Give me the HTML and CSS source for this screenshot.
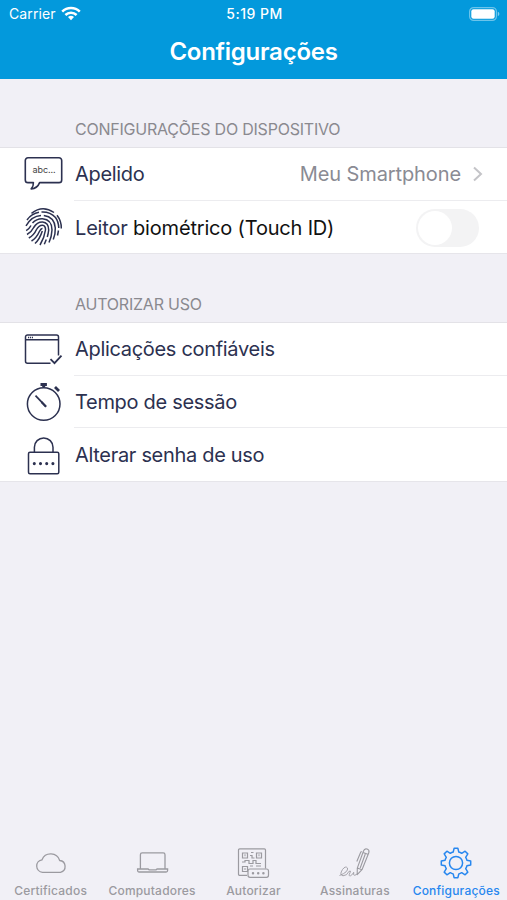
FILE: index.html
```
<!DOCTYPE html>
<html lang="pt-BR">
<head>
    <meta charset="UTF-8">
    <meta name="viewport" content="width=device-width, initial-scale=1.0">
    <title>Configurações</title>
    <link rel="stylesheet" href="styles.css">
</head>
<body>
    <header class="header">
        <div class="status-bar">
            <div class="carrier">
                <span>Carrier</span>
                <svg class="wifi" width="20" height="15" viewBox="0 0 20 15" fill="none" stroke="#fff" stroke-width="2.5">
                    <path d="M1.2 5.6a12.5 12.5 0 0 1 17.6 0M4.4 9a8 8 0 0 1 11.2 0"/>
                    <path d="M10 14.2l-3-3.1a4.4 4.4 0 0 1 6 0z" fill="#fff" stroke="none"/>
                </svg>
            </div>
            <span class="time">5:19 PM</span>
            <svg class="battery" width="31" height="14" viewBox="0 0 31 14">
                <rect x=".6" y=".6" width="26.8" height="12.8" rx="4" fill="none" stroke="#fff" stroke-opacity=".42" stroke-width="1.2"/>
                <rect x="2.3" y="2.3" width="23.4" height="9.4" rx="2.2" fill="#fff"/>
                <path d="M28.8 4.8v4.4q1.6-.6 1.6-2.2t-1.6-2.2z" fill="#fff" fill-opacity=".5"/>
            </svg>
        </div>
        <h1>Configurações</h1>
    </header>

    <main>
        <h2>CONFIGURAÇÕES DO DISPOSITIVO</h2>
        <ul class="list">
            <li class="row">
                <svg class="icon" viewBox="0 0 40 40" fill="none" stroke="#2c3150" stroke-width="1.6" stroke-linejoin="round">
                    <path d="M5 3.8h31a2.7 2.7 0 0 1 2.7 2.7v19.4a2.7 2.7 0 0 1-2.7 2.7H16.6q-2.2 5.8-8.4 6.3 2.4-2.6 2.2-6.3H5a2.7 2.7 0 0 1-2.7-2.7V6.5A2.7 2.7 0 0 1 5 3.8z"/>
                    <text class="bubble-text" x="9.6" y="19.3">abc...</text>
                </svg>
                <div class="cell">
                    <span class="label">Apelido</span>
                    <span class="value">Meu Smartphone</span>
                    <svg class="chevron" width="10" height="16" viewBox="0 0 10 16" fill="none" stroke="#c4c4c8" stroke-width="2">
                        <path d="M1 1.5l7 6.5-7 6.5"/>
                    </svg>
                </div>
            </li>
            <li class="row">
                <svg class="icon" viewBox="0 0 40 40" fill="none" stroke="#2c3150" stroke-width="1.5">
                    <path d="M8.5 6.3Q19.5-2.3 31 5.5"/>
                    <path d="M4 13Q8.500 6.500 16 5.300M18.500 5Q27 4.500 32.500 10.500 35.500 14.500 35.800 21M38.300 21.500Q38.500 14 34 8.300"/>
                    <path d="M3 18.800Q8.500 9 18 8.400M20.800 8.500Q31.500 9.800 32.300 21 32.500 27 30.300 32.500M35.500 23.500l-1 5"/>
                    <path d="M3.200 23.600Q6.500 21.500 8 18.500M9.500 16Q13.500 11.500 19.500 11.700 29 12.500 29 23 28.700 30 26 35.500"/>
                    <path d="M4 27.500Q8.500 25 10.700 20.500 14 14.900 19.500 15 25.700 15.600 25.700 23 25.300 26.500 24.300 30M23.300 32.500l-2 4.700"/>
                    <path d="M5.800 31Q11 28.200 13.500 22.500 16 18.100 19.500 18.200 22.700 18.600 22.500 23 21.500 30.500 17 38"/>
                    <path d="M8.500 34Q13.500 31 16.400 24.500 18 21.300 19.500 21.500M12 36.500Q16.800 32 19.300 24"/>
                </svg>
                <div class="cell">
                    <span class="label leitor">Leitor <b>biométrico (Touch ID)</b></span>
                    <span class="switch"></span>
                </div>
            </li>
        </ul>

        <h2 class="second">AUTORIZAR USO</h2>
        <ul class="list">
            <li class="row">
                <svg class="icon" viewBox="0 0 40 40" fill="none" stroke="#2c3150" stroke-width="1.5">
                    <path d="M27.5 34.2H4.5a2 2 0 0 1-2-2V8a2 2 0 0 1 2-2h29a2 2 0 0 1 2 2v18.5M2.5 10.8h33"/>
                    <path d="M5 8.4h5" stroke-dasharray="1.2 .8"/>
                    <path d="M27.5 30.2l4 4 7-7.5" stroke-width="1.8"/>
                </svg>
                <div class="cell"><span class="label">Aplicações confiáveis</span></div>
            </li>
            <li class="row">
                <svg class="icon" viewBox="0 0 40 40" fill="none" stroke="#2c3150" stroke-width="1.5">
                    <circle cx="20.7" cy="22" r="16.3"/>
                    <path d="M20.7 5v-2.5" stroke-width="3"/>
                    <path d="M17.5 2.5h6.4M32 5l4 4" stroke-width="2.8"/>
                    <path d="M12.5 13.7l10.6 11" stroke-width="1.7"/>
                    <path d="M18.5 20l4.5 4.7" stroke-width="2"/>
                </svg>
                <div class="cell"><span class="label">Tempo de sessão</span></div>
            </li>
            <li class="row">
                <svg class="icon" viewBox="0 0 40 40" fill="none" stroke="#2c3150" stroke-width="1.5">
                    <rect x="5.5" y="17.2" width="30.3" height="21.5" rx="1.5"/>
                    <path d="M11.4 17.2v-5a9.3 9.3 0 0 1 18.6 0v5"/>
                    <path d="M11.3 28.6h19.5" stroke-width="3.1" stroke-linecap="round" stroke-dasharray="0 6.2"/>
                </svg>
                <div class="cell"><span class="label">Alterar senha de uso</span></div>
            </li>
        </ul>
    </main>

    <nav class="tabs">
        <div class="tab">
            <svg width="34" height="34" viewBox="0 0 34 34" fill="none" stroke="currentColor" stroke-width="1.3">
                <path d="M8.5 26.3a6.3 6.3 0 0 1-.5-12.5A9.4 9.4 0 0 1 25.700 14.500a6 6 0 0 1 .8 11.800z"/>
            </svg>
            <span>Certificados</span>
        </div>
        <div class="tab">
            <svg width="34" height="34" viewBox="-.6 0 34 34" fill="none" stroke="currentColor" stroke-width="1.3">
                <path d="M4.800 22.700V8.700a1.800 1.800 0 0 1 1.800-1.800h21a1.800 1.800 0 0 1 1.800 1.800v14M2 23h10.500l1 .8h7l1-.8H32v1.500a1.500 1.500 0 0 1-1.500 1.500h-27A1.500 1.500 0 0 1 2 24.500z"/>
            </svg>
            <span>Computadores</span>
        </div>
        <div class="tab">
            <svg width="34" height="34" viewBox="0 0 34 34" fill="none" stroke="currentColor" stroke-width="1.2">
                <path d="M11 29.400H3.700a1.200 1.200 0 0 1-1.200-1.200V4a1.200 1.200 0 0 1 1.200-1.200h24.600A1.200 1.200 0 0 1 29.500 4v18.500"/>
                <path d="M6.500 7h5v5h-5zM20.500 7h5v5h-5zM6.500 20.500h5v5h-5zM15 6.500h2.500M14 9.500h2v2.500h2.500M6 16h3v-1.500h4v3h4v-3h3v3h5M14 20h3M20 20h5"/>
                <path d="M8.500 9.300h1M22.500 9.300h1M8.500 23h1" stroke-width="2"/>
                <rect x="12" y="23" width="20.500" height="8.300" rx="2" fill="#f1f0f6"/>
                <path d="M17 27.200h11" stroke-width="2.500" stroke-linecap="round" stroke-dasharray="0 5.200"/>
            </svg>
            <span>Autorizar</span>
        </div>
        <div class="tab">
            <svg width="34" height="34" viewBox="1 0 34 34" fill="none" stroke="currentColor" stroke-width="1.1" stroke-linejoin="round">
                <path d="M20.200 28.600l.1-6.500L26.500 5q1-2.800 3.600-1.900t1.700 3.700L25 23.700zM20.300 22.100l4.700 1.600M26 6.500l4.800 1.800M24.800 5.500l-1 .5-4 9.500M28.300 8l-5.100 14"/>
                <path d="M2.500 29.500Q11.500 26 10.500 22q-2-2.500-5 1.500-3.500 5.500.5 6.300 4 0 6-4.500 2.500-1 1 1.500-2 3.500.5 3 3-2 3.200-3.500-.5 3.500 1 3t2.500-1.500" stroke-width=".9"/>
            </svg>
            <span>Assinaturas</span>
        </div>
        <div class="tab active">
            <svg width="34" height="34" viewBox="-17 -17 34 34" fill="none" stroke="currentColor" stroke-width="1.5" stroke-linejoin="round">
                <circle r="6.6"/>
                <path d="M-1.900-14.700H1.900L2.800-10.900Q4.300-10.600 5.700-9.700L9.100-11.800 11.800-9.100 9.700-5.700Q10.600-4.300 10.900-2.800L14.700-1.900V1.900L10.900 2.800Q10.600 4.300 9.700 5.700L11.800 9.100 9.100 11.800 5.700 9.700Q4.300 10.600 2.800 10.900L1.900 14.700H-1.900L-2.800 10.900Q-4.300 10.600-5.700 9.700L-9.100 11.800-11.800 9.100-9.700 5.700Q-10.600 4.300-10.900 2.800L-14.700 1.900V-1.900L-10.900-2.800Q-10.600-4.300-9.700-5.700L-11.800-9.100-9.100-11.800-5.700-9.700Q-4.300-10.600-2.800-10.900z"/>
            </svg>
            <span>Configurações</span>
        </div>
    </nav>
</body>
</html>
```
FILE: styles.css
```
* {
    box-sizing: border-box;
}
body {
    margin: 0;
    height: 900px;
    display: flex;
    flex-direction: column;
    overflow: hidden;
    background-color: #f1f0f6;
    font-family: Inter, "Liberation Sans", sans-serif;
}
.header {
    height: 79px;
    background-color: #0399dc;
    color: white;
}
.status-bar {
    height: 27px;
    padding: 0 7px 0 9px;
    display: grid;
    grid-template-columns: 1fr auto 1fr;
    align-items: center;
    font-size: 14px;
}
.carrier {
    display: flex;
    align-items: center;
    gap: 5px;
    letter-spacing: 0.1px;
}
.time {
    font-weight: 500;
    letter-spacing: 0.5px;
}
.battery {
    justify-self: end;
}
h1 {
    margin: 0;
    font-size: 24px;
    line-height: 50px;
    font-weight: 600;
    letter-spacing: -0.25px;
    text-align: center;
}
main {
    flex: 1;
}
h2 {
    margin: 0;
    height: 68px;
    padding: 40px 0 0 75px;
    font-size: 16px;
    line-height: 20px;
    font-weight: 400;
    letter-spacing: -0.22px;
    color: #8a898f;
}
.second {
    height: 68.6px;
    padding-top: 41px;
}
.list {
    margin: 0;
    padding: 0;
    list-style: none;
    background-color: white;
    border-top: 1px solid #e3e2e7;
    box-shadow: 0 1px 0 #e6e5ea;
}
.row {
    height: 52.7px;
    padding-left: 23px;
    display: flex;
    align-items: center;
}
.icon {
    width: 40px;
    height: 40px;
}
.bubble-text {
    font-size: 9px;
    letter-spacing: -0.1px;
    fill: #444;
    stroke: none;
}
.cell {
    flex: 1;
    height: 100%;
    margin-left: 11px;
    padding: 1px 24px 0 1px;
    display: flex;
    align-items: center;
    border-bottom: 1px solid #ececef;
}
.row:last-child .cell {
    border-bottom: none;
}
.label {
    font-size: 20px;
    letter-spacing: -0.31px;
    color: #2c3150;
}
.leitor {
    letter-spacing: -0.18px;
}
.label b {
    font-weight: 400;
    color: #111;
}
.value {
    margin-left: auto;
    font-size: 20px;
    letter-spacing: -0.1px;
    color: #8a8b94;
}
.chevron {
    margin-left: 12px;
}
.switch {
    width: 63px;
    height: 38px;
    margin-left: auto;
    margin-right: 4px;
    padding: 2px;
    border-radius: 19px;
    background-color: #f3f3f4;
}
.switch::before {
    content: "";
    display: block;
    width: 34px;
    height: 34px;
    border-radius: 50%;
    background-color: white;
}
.tabs {
    height: 55px;
    padding-top: 1px;
    display: grid;
    grid-template-columns: repeat(5, 1fr);
}
.tab {
    display: flex;
    flex-direction: column;
    align-items: center;
    font-size: 12px;
    line-height: 16px;
    font-weight: 500;
    letter-spacing: 0.2px;
    color: #9b9aa0;
}
.tab span {
    margin-top: 3px;
}
.active {
    color: #2787ef;
}
```
